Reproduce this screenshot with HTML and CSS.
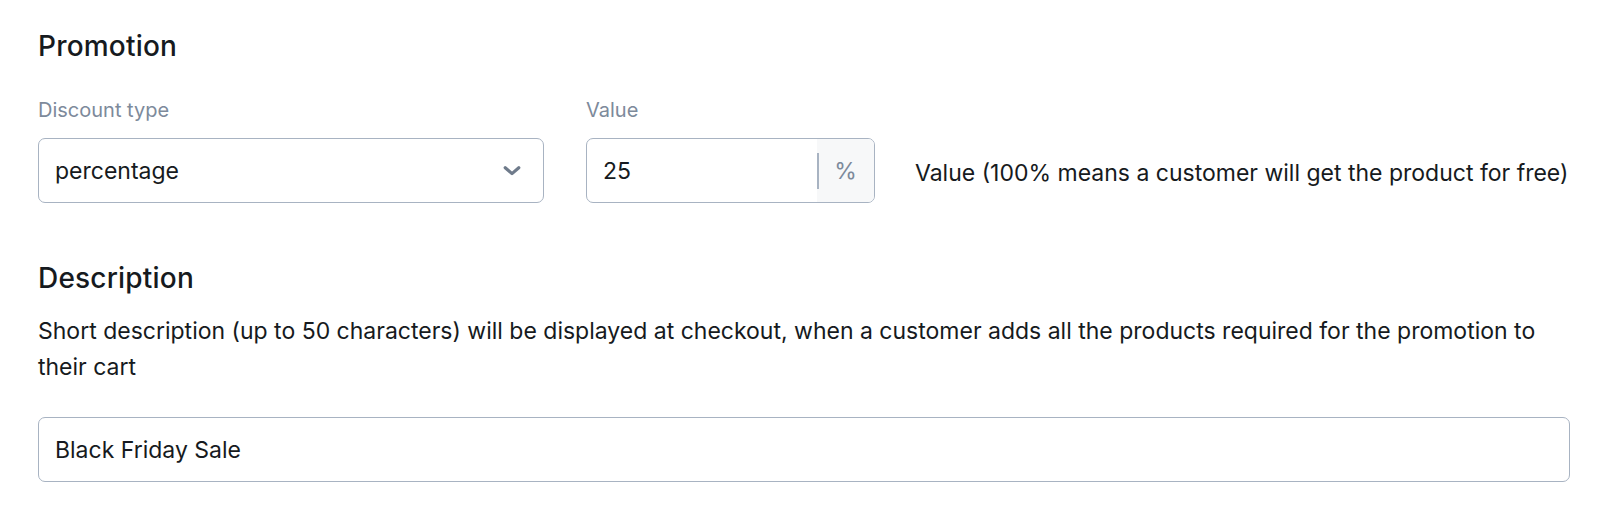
FILE: index.html
```html
<!DOCTYPE html>
<html lang="en">
<head>
    <meta charset="UTF-8">
    <meta name="viewport" content="width=device-width, initial-scale=1.0">
    <title>Promotion</title>
    <link rel="stylesheet" href="styles.css">
</head>
<body>
    <div id="container">
        <div class="section">
            <h2 class="section_title">Promotion</h2>
            <div class="row">
                <div class="field field_type">
                    <label class="field_label" for="discount_type">Discount type</label>
                    <div class="select_box">
                        <span class="select_value" id="discount_type">percentage</span>
                        <svg class="chevron" width="20" height="20" viewBox="0 0 20 20">
                            <path d="M3.2 6.8 L10 12.6 L16.8 6.8" fill="none" stroke="#6f7b8b" stroke-width="3.2" stroke-linecap="round" stroke-linejoin="round"/>
                        </svg>
                    </div>
                </div>
                <div class="field field_value">
                    <label class="field_label" for="value">Value</label>
                    <div class="input_group">
                        <input type="text" id="value" value="25">
                        <span class="suffix">%</span>
                    </div>
                </div>
                <div class="hint">Value (100% means a customer will get the product for free)</div>
            </div>
        </div>
        <div class="section">
            <h2 class="section_title">Description</h2>
            <p class="section_text">Short description (up to 50 characters) will be displayed at checkout, when a customer adds all the products required for the promotion to their cart</p>
            <input type="text" class="text_input" value="Black Friday Sale">
        </div>
    </div>
</body>
</html>
```

FILE: styles.css
```css
body{
    margin:0; padding:0;
    font-family: Inter, 'Noto Sans', sans-serif;
    color:#161a20;
    background:#fff;
}
#container{
    width:1532px;
    padding:29px 0 0 38px;
}
.section_title{
    margin:0;
    font-size:28px;
    font-weight:500;
    line-height:34px;
    letter-spacing:0.2px;
}
.row{
    display:flex;
    align-items:flex-end;
    margin-top:35px;
}
.field{
    display:flex;
    flex-direction:column;
}
.field_label{
    font-size:20px;
    color:#7d8a9b;
    line-height:24px;
    margin-bottom:16px;
}
.field_type{
    width:506px;
    margin-right:42px;
}
.field_value{
    width:289px;
    margin-right:40px;
}
.select_box, .input_group, .text_input{
    box-sizing:border-box;
    height:65px;
    border:1px solid #a8b3c2;
    border-radius:7px;
    background:#fff;
}
.select_box{
    display:flex;
    align-items:center;
    justify-content:space-between;
    padding:0 21px 0 16px;
}
.select_value{
    font-size:23px;
}
.input_group{
    display:flex;
    align-items:stretch;
    overflow:hidden;
}
.input_group input{
    flex:1;
    min-width:0;
    border:none;
    outline:none;
    font-family:inherit;
    font-size:23px;
    color:#161a20;
    padding:0 0 0 16px;
    background:transparent;
}
.suffix{
    width:57px;
    display:flex;
    align-items:center;
    justify-content:center;
    background:#f7f8f9;
    color:#7d8a9b;
    font-size:23px;
    position:relative;
}
.suffix::before{
    content:"";
    position:absolute;
    left:0; top:14px; bottom:13px;
    width:2px;
    background:#a8b3c2;
}
.hint{
    font-size:23px;
    line-height:30px;
    padding-bottom:15px;
    white-space:nowrap;
}
.section + .section{
    margin-top:58px;
}
.section_text{
    margin:18px 0 0;
    font-size:23px;
    line-height:36px;
}
.text_input{
    display:block;
    width:100%;
    margin-top:32px;
    padding:0 16px;
    font-family:inherit;
    font-size:23px;
    color:#161a20;
    outline:none;
}
```
